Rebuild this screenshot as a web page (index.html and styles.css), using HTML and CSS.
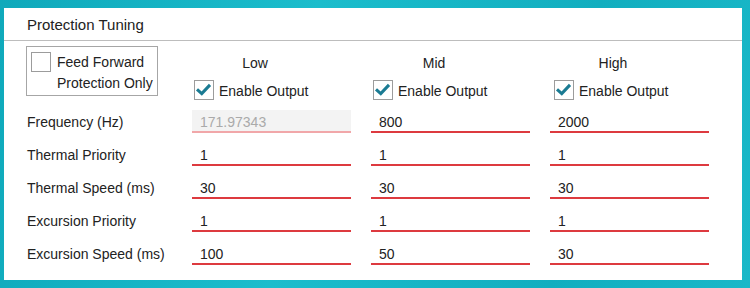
FILE: index.html
```html
<!DOCTYPE html>
<html>
	<head>
		<meta charset="UTF-8">
		<title>Protection Tuning</title>
		<link rel="stylesheet" href="styles.css">
	</head>
	<body>
		<div class="panel">
			<div class="panel-head">Protection Tuning</div>
			<div class="grid">
				<div class="feed">
					<span class="box"></span>
					<span class="feed-text">Feed Forward<br>Protection Only</span>
				</div>
				<div class="col-head">
					<div class="col-title">Low</div>
					<label class="check-row"><span class="box checked"><svg viewBox="0 0 20 20"><path d="M3.5 10.5 L7.5 14 L15.5 5.5"/></svg></span><span class="check-text">Enable Output</span></label>
				</div>
				<div class="col-head">
					<div class="col-title">Mid</div>
					<label class="check-row"><span class="box checked"><svg viewBox="0 0 20 20"><path d="M3.5 10.5 L7.5 14 L15.5 5.5"/></svg></span><span class="check-text">Enable Output</span></label>
				</div>
				<div class="col-head high">
					<div class="col-title">High</div>
					<label class="check-row"><span class="box checked"><svg viewBox="0 0 20 20"><path d="M3.5 10.5 L7.5 14 L15.5 5.5"/></svg></span><span class="check-text">Enable Output</span></label>
				</div>

				<div class="label">Frequency (Hz)</div>
				<div class="field disabled">171.97343</div>
				<div class="field">800</div>
				<div class="field">2000</div>

				<div class="label">Thermal Priority</div>
				<div class="field">1</div>
				<div class="field">1</div>
				<div class="field">1</div>

				<div class="label">Thermal Speed (ms)</div>
				<div class="field">30</div>
				<div class="field">30</div>
				<div class="field">30</div>

				<div class="label">Excursion Priority</div>
				<div class="field">1</div>
				<div class="field">1</div>
				<div class="field">1</div>

				<div class="label">Excursion Speed (ms)</div>
				<div class="field">100</div>
				<div class="field">50</div>
				<div class="field">30</div>
			</div>
		</div>
	</body>
</html>
```

FILE: styles.css
```css
body{
	margin: 0;
	height: 288px;
	overflow: hidden;
	background: linear-gradient(100deg, #0fa9bb, #1bbdcc 40%, #12aebf 75%, #19b8c8);
	font-family: "Liberation Sans", Arial, sans-serif;
	font-size: 14px;
	color: #222;
}
.panel{
	margin: 8px 8px 0 4px;
	height: 272px;
	box-sizing: border-box;
	background: #fff;
}
.panel-head{
	height: 32px;
	line-height: 34px;
	padding-left: 23px;
	font-size: 15px;
	border-bottom: 1px solid #bdbdbd;
}
.grid{
	display: grid;
	grid-template-columns: 146px 159px 159px 159px;
	column-gap: 20px;
	row-gap: 10px;
	padding: 5px 0 0 22px;
}
.feed{
	display: flex;
	align-items: flex-start;
	gap: 6px;
	width: 132px;
	height: 50px;
	box-sizing: border-box;
	padding: 5px 0 0 4px;
	border: 1px solid #a6a6a6;
	white-space: nowrap;
}
.feed-text{
	line-height: 21px;
}
.box{
	flex: none;
	width: 20px;
	height: 20px;
	box-sizing: border-box;
	border: 1px solid #9c9c9c;
	background: #fff;
}
.box svg{
	display: block;
	width: 18px;
	height: 18px;
}
.box svg path{
	fill: none;
	stroke: #1a7b93;
	stroke-width: 3.4;
	stroke-linecap: square;
}
.col-head{
	height: 54px;
	padding-top: 7px;
	box-sizing: border-box;
}
.col-title{
	width: 126px;
	text-align: center;
	line-height: 20px;
}
.check-row{
	display: flex;
	align-items: center;
	gap: 5px;
	margin: 6px 0 0 2px;
	line-height: 20px;
	white-space: nowrap;
}
.high .check-row{
	margin-left: 4px;
}
.check-text{
	padding-top: 2px;
}
.label{
	height: 23px;
	box-sizing: border-box;
	line-height: 21px;
	padding: 2px 0 0 1px;
	white-space: nowrap;
}
.field{
	height: 23px;
	box-sizing: border-box;
	padding: 3px 8px 0;
	line-height: 18px;
	border-bottom: 2px solid #dd3a3f;
}
.field.disabled{
	background: #f3f3f3;
	color: #aaa;
	border-bottom-color: #f1a7a9;
}
```
